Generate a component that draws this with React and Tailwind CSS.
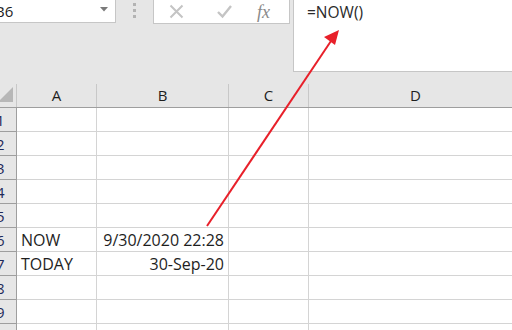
export default function App() {
  const font = { fontFamily: '"Open Sans", "Noto Sans", sans-serif' };
  const rows = [
    ["1", "", ""],
    ["2", "", ""],
    ["3", "", ""],
    ["4", "", ""],
    ["5", "", ""],
    ["6", "NOW", "9/30/2020 22:28"],
    ["7", "TODAY", "30-Sep-20"],
    ["8", "", ""],
    ["9", "", ""],
    ["10", "", ""],
  ];
  return (
    <div className="relative w-[512px] h-[330px] overflow-hidden bg-[#e6e6e6] text-[#1e1e1e]" style={font}>
      {/* top bar */}
      <div className="flex items-start h-[84px]">
        <div className="w-[116px] h-[23px] bg-white border-r border-b border-[#c6c6c6] flex items-center relative">
          <span className="text-[15px] leading-none ml-[-5px]">B6</span>
          <svg className="absolute left-[100px] top-[7px]" width="8" height="5" viewBox="0 0 8 5">
            <path d="M0 0 H8 L4 4.5 Z" fill="#7a7a7a" />
          </svg>
        </div>
        <div className="w-[37px] flex flex-col items-center gap-[3px] pt-[3px]">
          <div className="w-[3px] h-[3px] bg-[#b3b3b3]" />
          <div className="w-[3px] h-[3px] bg-[#b3b3b3]" />
          <div className="w-[3px] h-[3px] bg-[#b3b3b3]" />
        </div>
        <div className="w-[137px] h-[24px] bg-white border-l border-r border-b border-[#c6c6c6] flex items-center relative">
          <svg className="absolute left-[15px] top-[4px]" width="15" height="15" viewBox="0 0 15 15">
            <path d="M1.5 1.5 L13.5 13.5 M13.5 1.5 L1.5 13.5" stroke="#c4c4c4" strokeWidth="2" />
          </svg>
          <svg className="absolute left-[63px] top-[4px]" width="15" height="15" viewBox="0 0 15 15">
            <path d="M1 8 L5.5 12.5 L14 2" stroke="#c4c4c4" strokeWidth="2.4" fill="none" />
          </svg>
          <span
            className="absolute left-[103px] top-[-1px] text-[18px] italic text-[#8a8a8a]"
            style={{ fontFamily: '"Liberation Serif", serif' }}
          >
            fx
          </span>
        </div>
        <div className="ml-[3px] flex-1 h-[72px] bg-white border-l border-b border-[#c6c6c6]">
          <div className="pl-[13px] pt-[1px] text-[15.5px] text-[#2a2a2a]">=NOW()</div>
        </div>
      </div>

      {/* header row */}
      <div className="flex h-[24px] border-b border-[#9e9e9e]">
        <div className="w-[17px] border-r border-[#c8c8c8] relative">
          <svg className="absolute left-0 top-[2px]" width="14" height="17" viewBox="0 0 14 17">
            <path d="M13 1 V16 H-2 Z" fill="#b7b7b7" />
          </svg>
        </div>
        <div className="w-[80px] border-r border-[#c8c8c8] flex items-center justify-center text-[15px]">A</div>
        <div className="w-[132px] border-r border-[#c8c8c8] flex items-center justify-center text-[15px]">B</div>
        <div className="w-[80px] border-r border-[#c8c8c8] flex items-center justify-center text-[15px]">C</div>
        <div className="flex-1 flex items-center justify-center text-[15px] pl-[10px]">D</div>
      </div>

      {/* rows */}
      {rows.map(([n, a, b]) => (
        <div key={n} className="flex h-[24px]">
          <div className="w-[17px] border-r border-b border-[#9e9e9e] bg-[#e6e6e6] overflow-hidden flex items-end">
            <span className="text-[15px] leading-[22px] ml-[-4px] text-[#1f2a5a]">{n}</span>
          </div>
          <div className="w-[80px] bg-white border-r border-b border-[#d4d4d4] flex items-end pl-[4px] text-[16px] leading-[22px]">
            {a}
          </div>
          <div className="w-[132px] bg-white border-r border-b border-[#d4d4d4] flex items-end justify-end pr-[4px] text-[16px] leading-[22px]">
            {b}
          </div>
          <div className="w-[80px] bg-white border-r border-b border-[#d4d4d4]" />
          <div className="flex-1 bg-white border-b border-[#d4d4d4]" />
        </div>
      ))}

      {/* red arrow */}
      <svg className="absolute left-0 top-0 pointer-events-none" width="512" height="330" viewBox="0 0 512 330">
        <line x1="207" y1="226" x2="331" y2="41" stroke="#e8202a" strokeWidth="2" />
        <polygon points="339,30 324,37 335,45" fill="#e8202a" />
      </svg>
    </div>
  );
}
